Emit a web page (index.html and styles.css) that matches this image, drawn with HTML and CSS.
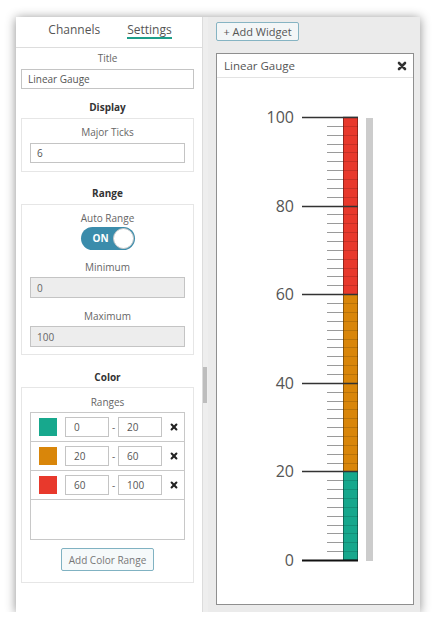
FILE: index.html
```html
<!DOCTYPE html>
<html lang="en">
<head>
    <meta charset="UTF-8">
    <meta name="viewport" content="width=device-width, initial-scale=1.0">
    <title>Linear Gauge Widget</title>
    <link rel="stylesheet" href="styles.css">
</head>
<body>
    <div class="window">
        <aside class="settings">
            <nav class="tabs">
                <span class="tab">Channels</span>
                <span class="tab tab-active">Settings</span>
            </nav>

            <div class="settings-body">
                <div class="label">Title</div>
                <input class="text-input title-input" type="text" value="Linear Gauge">

                <div class="heading heading-display">Display</div>
                <div class="group group-display">
                    <div class="label">Major Ticks</div>
                    <input class="text-input" type="text" value="6">
                </div>

                <div class="heading heading-range">Range</div>
                <div class="group group-range">
                    <div class="label">Auto Range</div>
                    <div class="toggle"><span class="toggle-text">ON</span><span class="toggle-knob"></span></div>
                    <div class="label label-min">Minimum</div>
                    <input class="text-input input-disabled" type="text" value="0" disabled>
                    <div class="label label-max">Maximum</div>
                    <input class="text-input input-disabled" type="text" value="100" disabled>
                </div>

                <div class="heading heading-color">Color</div>
                <div class="group group-color">
                    <div class="label">Ranges</div>
                    <div class="ranges" id="ranges"></div>
                    <button class="add-range">Add Color Range</button>
                </div>
            </div>
        </aside>

        <div class="scrollbar"><div class="scroll-thumb"></div></div>

        <main class="dashboard">
            <button class="add-widget">+ Add Widget</button>
            <section class="card">
                <header class="card-header">
                    <span>Linear Gauge</span>
                    <svg class="close-icon" viewBox="0 0 10 10" width="10" height="10">
                        <path d="M2 2L8 8M8 2L2 8" stroke="#333" stroke-width="2.6" stroke-linecap="round"/>
                    </svg>
                </header>
                <svg id="gauge" class="gauge" width="196" height="526"></svg>
            </section>
        </main>
    </div>

    <script>
        const colorRanges = [
            { from: 0, to: 20, color: '#17a88d' },
            { from: 20, to: 60, color: '#d9860a' },
            { from: 60, to: 100, color: '#e8392c' }
        ];
        const NS = 'http://www.w3.org/2000/svg';

        // settings list of ranges
        const list = document.getElementById('ranges');
        colorRanges.forEach(r => {
            const row = document.createElement('div');
            row.className = 'range-row';
            row.innerHTML =
                `<span class="swatch" style="background:${r.color}"></span>` +
                `<input class="range-input" type="text" value="${r.from}">` +
                `<span class="dash">-</span>` +
                `<input class="range-input" type="text" value="${r.to}">` +
                `<svg class="remove-icon" viewBox="0 0 10 10" width="8" height="8">` +
                `<path d="M2 2L8 8M8 2L2 8" stroke="#222" stroke-width="2.6" stroke-linecap="round"/></svg>`;
            list.appendChild(row);
        });

        // gauge
        const svg = document.getElementById('gauge');
        function y(v) { return 482 - 4.43 * v; }
        function add(tag, attrs) {
            const el = document.createElementNS(NS, tag);
            for (const k in attrs) el.setAttribute(k, attrs[k]);
            svg.appendChild(el);
            return el;
        }

        add('rect', { x: 149, y: 40, width: 7, height: 443, fill: '#cccccc' });

        colorRanges.forEach(r => {
            add('rect', { x: 126, y: y(r.to), width: 15, height: y(r.from) - y(r.to), fill: r.color });
        });
        add('rect', { x: 126.5, y: y(100), width: 14, height: y(0) - y(100), fill: 'none', stroke: 'rgba(0,0,0,0.35)', 'stroke-width': 1 });

        for (let v = 2; v < 100; v += 2) {
            if (v % 20 === 0) continue;
            const ty = Math.round(y(v)) + 0.5;
            add('line', { x1: 110, x2: 126, y1: ty, y2: ty, stroke: '#9a9a9a', 'stroke-width': 1 });
            add('line', { x1: 126, x2: 141, y1: ty, y2: ty, stroke: 'rgba(0,0,0,0.14)', 'stroke-width': 1 });
        }

        for (let v = 0; v <= 100; v += 20) {
            const ty = Math.round(y(v)) + 0.5;
            add('line', { x1: 85, x2: 141, y1: ty, y2: ty, stroke: v === 0 ? '#111' : '#333', 'stroke-width': v === 0 ? 2 : 1.3 });
            const t = add('text', { x: 77, y: ty, 'text-anchor': 'end', dy: '0.36em', class: 'gauge-label' });
            t.textContent = v;
        }
    </script>
</body>
</html>
```

FILE: styles.css
```css
* {
    box-sizing: border-box;
}
body {
    margin: 0;
    background-color: #fff;
    font-family: "Open Sans", "DejaVu Sans", sans-serif;
    color: #555;
}
.window {
    display: flex;
    width: 404px;
    height: 595px;
    margin: 17px 0 0 16px;
    box-shadow: 0 1px 10px rgba(0, 0, 0, 0.45);
}

/* left settings panel */
.settings {
    width: 186px;
    background-color: #fff;
}
.tabs {
    display: flex;
    justify-content: center;
    gap: 27px;
    height: 31px;
    padding-left: 2px;
    border-bottom: 1px solid #ddd;
}
.tab {
    height: 22px;
    padding-top: 6px;
    font-size: 12px;
    line-height: 14px;
    color: #555;
}
.tab-active {
    border-bottom: 2px solid #1e9e8a;
}
.settings-body {
    padding: 3px 8px 0 5px;
}
.label {
    font-size: 10px;
    line-height: 14px;
    text-align: center;
    color: #666;
}
.heading {
    font-size: 10px;
    line-height: 14px;
    font-weight: bold;
    text-align: center;
    color: #333;
}
.text-input {
    display: block;
    width: 100%;
    height: 20px;
    margin-top: 4px;
    padding: 0 6px;
    border: 1px solid #c4c4c4;
    font-family: "Open Sans", "DejaVu Sans", sans-serif;
    font-size: 10px;
    color: #555;
    background-color: #fff;
}
.input-disabled {
    height: 21px;
    margin-top: 3px;
    background-color: #ededed;
    color: #666;
}
.heading-display {
    margin-top: 11px;
}
.heading-range {
    margin-top: 14px;
}
.heading-color {
    margin-top: 15px;
}
.group {
    margin-top: 4px;
    padding: 6px 8px 8px;
    border: 1px solid #e6e6e6;
}
.group-range {
    padding-bottom: 7px;
}
.group-color {
    margin-top: 3px;
    padding-top: 7px;
    padding-bottom: 11px;
}
.toggle {
    position: relative;
    width: 54px;
    height: 23px;
    margin: 2px auto 0;
    border-radius: 12px;
    background-color: #3b8cab;
}
.toggle-text {
    display: block;
    padding-left: 12px;
    font-size: 10px;
    font-weight: bold;
    line-height: 23px;
    color: #fff;
}
.toggle-knob {
    position: absolute;
    top: 1px;
    right: 1px;
    width: 21px;
    height: 21px;
    border-radius: 50%;
    border: 1px solid #c8c8c8;
    background-color: #fff;
}
.label-min {
    margin-top: 10px;
}
.label-max {
    margin-top: 11px;
}
.ranges {
    height: 128px;
    margin-top: 3px;
    border: 1px solid #c8c8c8;
}
.range-row {
    display: flex;
    align-items: center;
    height: 29px;
    padding-left: 8px;
    border-bottom: 1px solid #c8c8c8;
}
.swatch {
    width: 18px;
    height: 18px;
}
.range-input {
    width: 44px;
    height: 20px;
    padding: 0 8px;
    border: 1px solid #c4c4c4;
    font-family: "Open Sans", "DejaVu Sans", sans-serif;
    font-size: 10px;
    color: #555;
}
.swatch + .range-input {
    margin-left: 8px;
}
.dash {
    width: 9px;
    font-size: 10px;
    text-align: center;
    color: #666;
}
.remove-icon {
    margin-left: 8px;
}
.add-range {
    display: block;
    width: 93px;
    height: 23px;
    margin: 8px auto 0;
    padding: 0;
    border: 1px solid #80b2c2;
    border-radius: 2px;
    background-color: #f5f9fa;
    font-family: "Open Sans", "DejaVu Sans", sans-serif;
    font-size: 10px;
    color: #777;
}

/* scrollbar between panels */
.scrollbar {
    width: 6px;
    background-color: #eeeeee;
    border-left: 1px solid #dcdcdc;
}
.scroll-thumb {
    width: 4px;
    height: 36px;
    margin-top: 350px;
    background-color: #bdbdbd;
}

/* right dashboard */
.dashboard {
    display: flex;
    flex-direction: column;
    width: 212px;
    padding: 5px 6px 7px 8px;
    background-color: #ebebeb;
}
.add-widget {
    align-self: flex-start;
    width: 83px;
    height: 19px;
    padding: 0;
    border: 1px solid #86b4c3;
    border-radius: 2px;
    background-color: #f3f6f7;
    font-family: "Open Sans", "DejaVu Sans", sans-serif;
    font-size: 11px;
    line-height: 17px;
    color: #555;
}
.card {
    flex: 1;
    display: flex;
    flex-direction: column;
    margin-top: 12px;
    border: 1px solid #8f8f8f;
    background-color: #fff;
}
.card-header {
    display: flex;
    align-items: center;
    justify-content: space-between;
    height: 24px;
    padding: 0 6px 0 7px;
    border-bottom: 1px solid #e3e3e3;
    font-size: 11.5px;
    color: #555;
}
.gauge {
    display: block;
}
.gauge-label {
    font-family: "Open Sans", "DejaVu Sans", sans-serif;
    font-size: 16px;
    fill: #555;
}
```
